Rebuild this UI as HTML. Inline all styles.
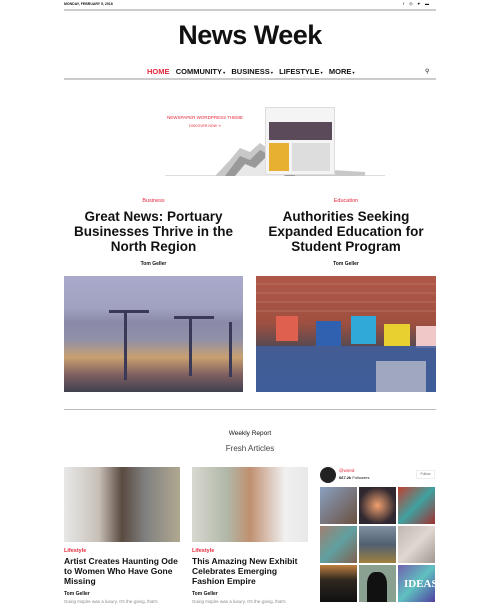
<!DOCTYPE html>
<html><head><meta charset="utf-8"><style>
*{margin:0;padding:0;box-sizing:border-box}
body{width:500px;height:602px;overflow:hidden;background:#fff;font-family:"Liberation Sans",Arial,sans-serif;color:#111;position:relative}
.a{position:absolute}
.c{text-align:center}
.red{color:#e4283c}
.t{font-weight:bold;color:#111}
</style></head><body>
<div class="a" style="left:64px;top:2px;font-size:3.5px;font-weight:bold">MONDAY, FEBRUARY 5, 2018</div>
<div class="a" style="left:403px;top:1px;font-size:4px;letter-spacing:5px">f◎♥▬</div>
<div class="a" style="left:64px;top:9px;width:372px;height:2px;background:#ccc"></div>
<div class="a c" style="left:64px;top:20px;width:372px;font-size:27px;font-weight:bold;letter-spacing:-0.5px">News Week</div>
<div class="a" style="left:147px;top:67px;font-size:7.5px;font-weight:bold;white-space:nowrap">
<span class="red">HOME</span>&nbsp;&nbsp; COMMUNITY<span style="font-size:4px"> ▾</span>&nbsp;&nbsp; BUSINESS<span style="font-size:4px"> ▾</span>&nbsp;&nbsp; LIFESTYLE<span style="font-size:4px"> ▾</span>&nbsp;&nbsp; MORE<span style="font-size:4px"> ▾</span></div>
<div class="a" style="left:425px;top:68px;font-size:6px">⚲</div>
<div class="a" style="left:64px;top:78px;width:372px;height:2px;background:#ccc"></div>
<!-- banner -->
<div class="a" style="left:165px;top:175px;width:220px;height:1px;background:#ddd"></div>
<div class="a c red" style="left:160px;top:115px;width:90px;font-size:4.5px">NEWSPAPER WORDPRESS THEME</div>
<div class="a c red" style="left:160px;top:124px;width:90px;font-size:3.5px">DISCOVER NOW ⇥</div>
<svg class="a" style="left:215px;top:138px" width="160" height="40"><polygon points="0,38 15,22 25,10 35,14 45,5 55,12 65,8 75,20 85,30 150,34 150,38" fill="#c8c8c8"/><polygon points="10,38 25,18 35,22 45,12 60,20 75,26 80,38" fill="#999"/><polygon points="20,38 30,26 40,30 50,20 62,30 70,38" fill="#e8e8e8"/></svg>
<div class="a" style="left:265px;top:107px;width:70px;height:68px;background:#f4f4f4;border:1px solid #ddd"></div>
<div class="a" style="left:269px;top:122px;width:63px;height:18px;background:#5a4a5a"></div>
<div class="a" style="left:269px;top:143px;width:20px;height:28px;background:#e8b030"></div>
<div class="a" style="left:292px;top:143px;width:38px;height:28px;background:#ddd"></div>
<!-- featured -->
<div class="a c red" style="left:64px;top:198px;width:179px;font-size:5.5px">Business</div>
<div class="a c t" style="left:64px;top:209px;width:179px;font-size:13.5px;line-height:15px">Great News: Portuary Businesses Thrive in the North Region</div>
<div class="a c" style="left:64px;top:261px;width:179px;font-size:5px;font-weight:bold">Tom Geller</div>
<div class="a c red" style="left:256px;top:198px;width:180px;font-size:5.5px">Education</div>
<div class="a c t" style="left:256px;top:209px;width:180px;font-size:13.5px;line-height:15px">Authorities Seeking Expanded Education for Student Program</div>
<div class="a c" style="left:256px;top:261px;width:180px;font-size:5px;font-weight:bold">Tom Geller</div>
<div class="a" style="left:64px;top:276px;width:179px;height:116px;background:linear-gradient(180deg,#aaaacc 0%,#a0a0c0 28%,#8a8aa8 40%,#9090a8 55%,#c8a070 70%,#806060 85%,#404050 100%)"></div>
<svg class="a" style="left:64px;top:300px" width="179" height="92"><g fill="#3a3a58"><rect x="60" y="10" width="3" height="70"/><rect x="45" y="10" width="40" height="3"/><rect x="125" y="16" width="3" height="60"/><rect x="110" y="16" width="40" height="3"/><rect x="165" y="22" width="3" height="55"/></g></svg>
<div class="a" style="left:256px;top:276px;width:180px;height:116px;background:linear-gradient(180deg,#b05848 0%,#a05040 40%,#5a4a50 60%,#3a4a78 100%)"></div>
<svg class="a" style="left:256px;top:276px" width="180" height="116"><g stroke="#d8a090" stroke-width="0.6" opacity="0.7"><line x1="0" y1="8" x2="180" y2="8"/><line x1="0" y1="17" x2="180" y2="17"/><line x1="0" y1="26" x2="180" y2="26"/><line x1="0" y1="35" x2="180" y2="35"/></g>
<rect x="20" y="40" width="22" height="25" fill="#e06050"/><rect x="60" y="45" width="25" height="25" fill="#3060b0"/><rect x="95" y="40" width="25" height="28" fill="#30a8d8"/><rect x="128" y="48" width="26" height="22" fill="#e8d030"/><rect x="160" y="50" width="20" height="22" fill="#f0c8c8"/>
<rect x="0" y="70" width="180" height="46" fill="#4060a0" opacity="0.85"/><rect x="120" y="85" width="50" height="31" fill="#a0a8c0"/></svg>
<div class="a" style="left:64px;top:409px;width:372px;height:1px;background:#bbb"></div>
<div class="a c" style="left:64px;top:430px;width:372px;font-size:6.5px">Weekly Report</div>
<div class="a c" style="left:64px;top:444px;width:372px;font-size:8px;color:#444">Fresh Articles</div>
<!-- cards -->
<div class="a" style="left:64px;top:467px;width:116px;height:75px;background:linear-gradient(90deg,#e8e8e8 0%,#c8c0b8 30%,#5a4a40 50%,#808080 70%,#b0a890)"></div>
<div class="a" style="left:192px;top:467px;width:116px;height:75px;background:linear-gradient(90deg,#d8d8d0 0%,#b0b8a8 30%,#c09070 50%,#f0f0f0 80%,#e8e8e8)"></div>
<div class="a red" style="left:64px;top:548px;font-size:5.5px;font-weight:bold">Lifestyle</div>
<div class="a t" style="left:64px;top:556px;width:118px;font-size:8.5px;line-height:10px">Artist Creates Haunting Ode to Women Who Have Gone Missing</div>
<div class="a" style="left:64px;top:591px;font-size:5px;font-weight:bold">Tom Geller</div>
<div class="a" style="left:64px;top:599px;font-size:4.5px;color:#888">Going Inspire was a luxury. It's the going, that's</div>
<div class="a red" style="left:192px;top:548px;font-size:5.5px;font-weight:bold">Lifestyle</div>
<div class="a t" style="left:192px;top:556px;width:118px;font-size:8.5px;line-height:10px">This Amazing New Exhibit Celebrates Emerging Fashion Empire</div>
<div class="a" style="left:192px;top:591px;font-size:5px;font-weight:bold">Tom Geller</div>
<div class="a" style="left:192px;top:599px;font-size:4.5px;color:#888">Going Inspire was a luxury. It's the going, that's</div>
<!-- insta -->
<div class="a" style="left:320px;top:467px;width:16px;height:16px;border-radius:50%;background:#222"></div>
<div class="a red" style="left:339px;top:468px;font-size:4.5px">@wired</div>
<div class="a" style="left:339px;top:475px;font-size:4px"><b>667.2k</b> Followers</div>
<div class="a" style="left:416px;top:470px;width:19px;height:9px;border:1px solid #eee;font-size:3.5px;text-align:center;line-height:7px;color:#666">Follow</div>
<div class="a" style="left:320px;top:487px;width:37px;height:37px;background:linear-gradient(135deg,#8aa0c0,#6a5040)"></div>
<div class="a" style="left:359px;top:487px;width:37px;height:37px;background:radial-gradient(#f0a070,#302830 70%)"></div>
<div class="a" style="left:398px;top:487px;width:37px;height:37px;background:linear-gradient(135deg,#c04030,#40a0a0,#a03030)"></div>
<div class="a" style="left:320px;top:526px;width:37px;height:37px;background:linear-gradient(135deg,#a08070,#60a0a0,#806050)"></div>
<div class="a" style="left:359px;top:526px;width:37px;height:37px;background:linear-gradient(180deg,#8090a0,#506070 50%,#a08040)"></div>
<div class="a" style="left:398px;top:526px;width:37px;height:37px;background:linear-gradient(135deg,#c0b8b0,#e0d8d0,#a09890)"></div>
<div class="a" style="left:320px;top:565px;width:37px;height:37px;background:linear-gradient(180deg,#c08040,#302820 40%,#101010)"></div>
<div class="a" style="left:359px;top:565px;width:37px;height:37px;background:#8aa090"></div>
<div class="a" style="left:367px;top:572px;width:20px;height:30px;background:#111;border-radius:40% 40% 0 0"></div>
<div class="a" style="left:398px;top:565px;width:37px;height:37px;background:linear-gradient(135deg,#7060b0,#60c0c0,#5040a0)"></div>
<div class="a" style="left:404px;top:578px;font-family:'Liberation Serif',serif;font-size:11px;color:#fff;font-weight:bold">IDEAS</div>
</body></html>
